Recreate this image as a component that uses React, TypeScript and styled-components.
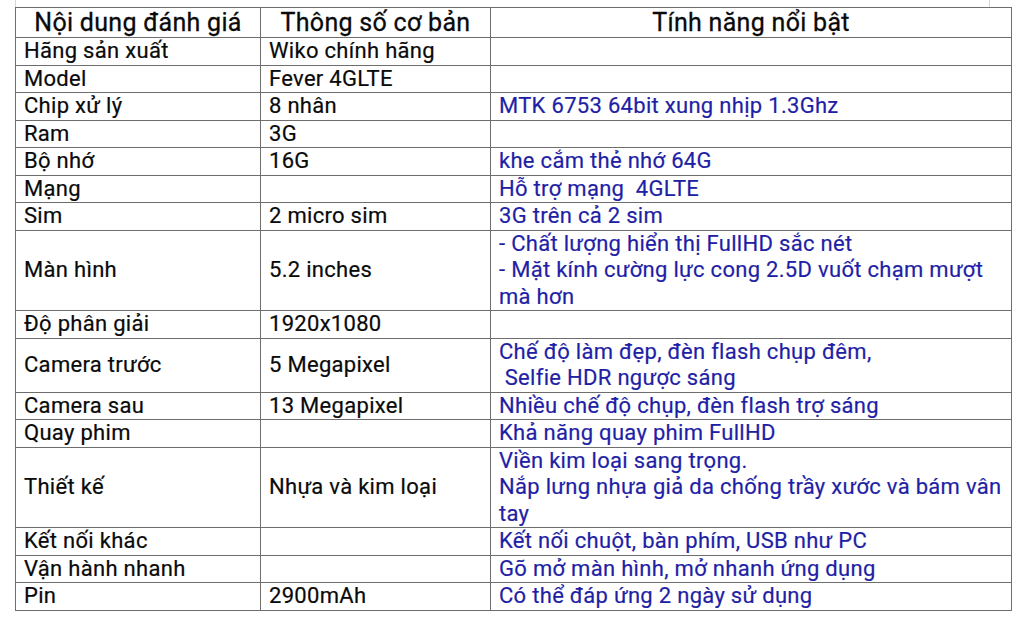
import styled, { createGlobalStyle } from "styled-components";

type Row = {
  name: string;
  spec?: string;
  features?: string[];
};

const rows: Row[] = [
  { name: "Hãng sản xuất", spec: "Wiko chính hãng" },
  { name: "Model", spec: "Fever 4GLTE" },
  { name: "Chip xử lý", spec: "8 nhân", features: ["MTK 6753 64bit xung nhịp 1.3Ghz"] },
  { name: "Ram", spec: "3G" },
  { name: "Bộ nhớ", spec: "16G", features: ["khe cắm thẻ nhớ 64G"] },
  { name: "Mạng", features: ["Hỗ trợ mạng\u00a0 4GLTE"] },
  { name: "Sim", spec: "2 micro sim", features: ["3G trên cả 2 sim"] },
  {
    name: "Màn hình",
    spec: "5.2 inches",
    features: [
      "- Chất lượng hiển thị FullHD sắc nét",
      "- Mặt kính cường lực cong 2.5D vuốt chạm mượt",
      "mà hơn",
    ],
  },
  { name: "Độ phân giải", spec: "1920x1080" },
  {
    name: "Camera trước",
    spec: "5 Megapixel",
    features: ["Chế độ làm đẹp, đèn flash chụp đêm,", "\u00a0Selfie HDR ngược sáng"],
  },
  { name: "Camera sau", spec: "13 Megapixel", features: ["Nhiều chế độ chụp, đèn flash trợ sáng"] },
  { name: "Quay phim", features: ["Khả năng quay phim FullHD"] },
  {
    name: "Thiết kế",
    spec: "Nhựa và kim loại",
    features: [
      "Viền kim loại sang trọng.",
      "Nắp lưng nhựa giả da chống trầy xước và bám vân",
      "tay",
    ],
  },
  { name: "Kết nối khác", features: ["Kết nối chuột, bàn phím, USB như PC"] },
  { name: "Vận hành nhanh", features: ["Gõ mở màn hình, mở nhanh ứng dụng"] },
  { name: "Pin", spec: "2900mAh", features: ["Có thể đáp ứng 2 ngày sử dụng"] },
];

export default function App() {
  return (
    <>
      <GlobalStyle />
      <Page>
        <SpecTable>
          <colgroup>
            <col style={{ width: 245 }} />
            <col style={{ width: 230 }} />
            <col />
          </colgroup>
          <thead>
            <tr>
              <HeadCell>Nội dung đánh giá</HeadCell>
              <HeadCell>Thông số cơ bản</HeadCell>
              <HeadCell>Tính năng nổi bật</HeadCell>
            </tr>
          </thead>
          <tbody>
            {rows.map((r) => (
              <tr key={r.name}>
                <Cell>{r.name}</Cell>
                <Cell>{r.spec}</Cell>
                <Cell $blue>
                  {r.features?.map((line, i) => (
                    <Line key={i}>{line}</Line>
                  ))}
                </Cell>
              </tr>
            ))}
          </tbody>
        </SpecTable>
      </Page>
    </>
  );
}

const GlobalStyle = createGlobalStyle`
  html, body {
    margin: 0;
    background: #ffffff;
  }
  body {
    font-family: Roboto, "Noto Sans", "Liberation Sans", sans-serif;
  }
`;

// faint crop marks from the original document sit over the page edge
const Page = styled.div`
  position: relative;
  width: 1024px;
  height: 617px;
  box-sizing: border-box;
  padding: 7px 12px 0 15px;
  background: #fff;

  &::before,
  &::after {
    content: "";
    position: absolute;
    top: 0;
    width: 0;
    height: 7px;
    border-left: 1px solid #d6d6d6;
  }
  &::before {
    left: 15px;
  }
  &::after {
    left: 989px;
  }
`;

const SpecTable = styled.table`
  width: 997px;
  border-collapse: collapse;
  table-layout: fixed;
  border: 1px solid #555;
`;

const HeadCell = styled.th`
  border: 1px solid #6e6e6e;
  padding: 0 8px;
  height: 29px;
  font-size: 25px;
  font-weight: 400;
  letter-spacing: 0.3px;
  line-height: 29px;
  color: #0a0a0a;
  -webkit-text-stroke: 0.3px currentColor;
  text-align: center;
  white-space: nowrap;
`;

const Cell = styled.td<{ $blue?: boolean }>`
  border: 1px solid #6e6e6e;
  padding: 0 8px;
  font-size: 22px;
  letter-spacing: 0.3px;
  line-height: 26.5px;
  height: 26.5px;
  vertical-align: middle;
  white-space: nowrap;
  -webkit-text-stroke: 0.2px currentColor;
  color: ${(p) => (p.$blue ? "#1f1fa6" : "#0a0a0a")};
`;

const Line = styled.div`
  white-space: pre;
`;
